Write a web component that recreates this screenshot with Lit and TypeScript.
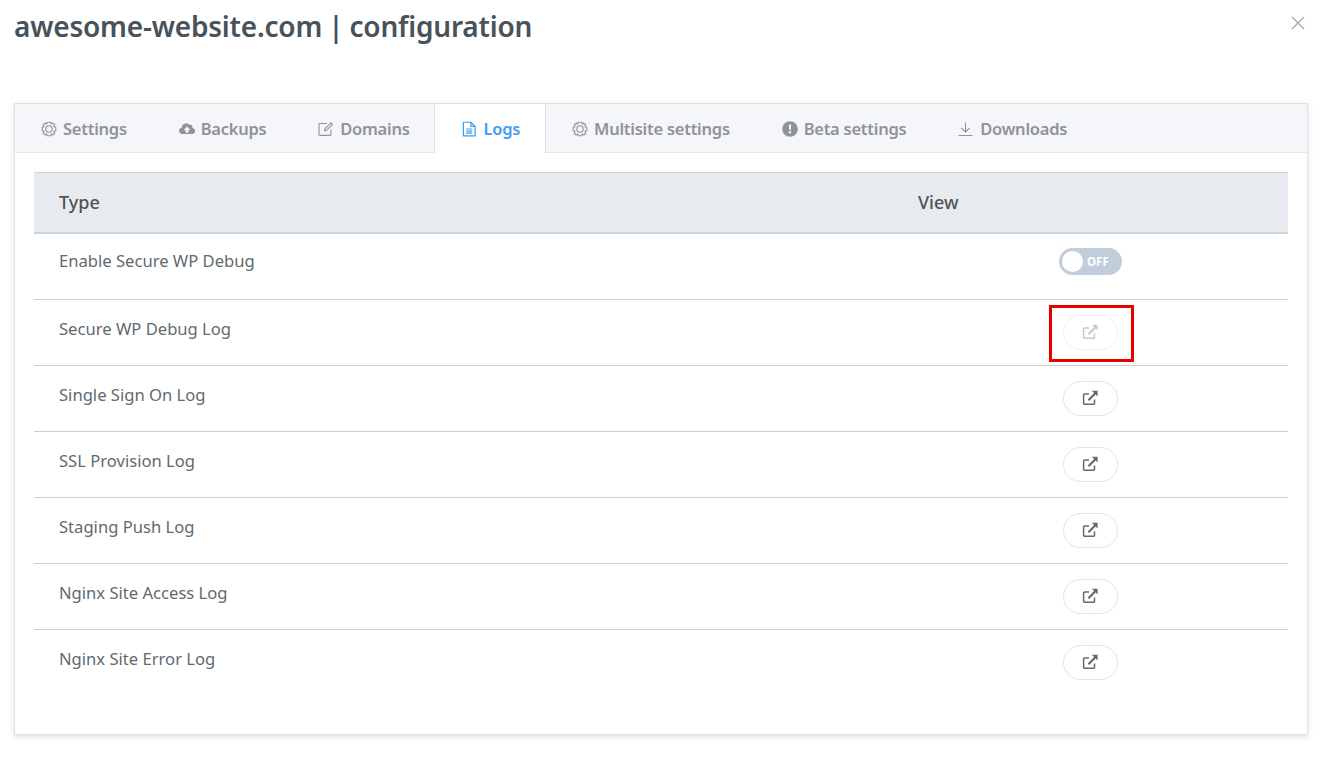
import { LitElement, html, css, svg } from "lit";
import { customElement } from "lit/decorators.js";

const gear = svg`<g fill="none" stroke="currentColor" stroke-width="1.1"><path d="M6.2 1.2h3.6l.5 1.8 1.6-.9 1.9 1.9-.9 1.7 1.9.5v3.6l-1.9.5.9 1.7-1.9 1.9-1.6-.9-.5 1.8H6.2l-.5-1.8-1.6.9-1.9-1.9.9-1.7-1.9-.5V6.2l1.9-.5-.9-1.7 1.9-1.9 1.6.9z" stroke-linejoin="round"/><circle cx="8" cy="8" r="3.2"/></g>`;
const cloud = svg`<path fill="currentColor" d="M13.300 6.900a2.500 2.500 0 0 0-3.300-3.100A4.200 4.200 0 0 0 2.700 6.300v.5A3 3 0 0 0 3.500 12.900h9.200a3 3 0 0 0 .6-6zM9.500 9v2.800H6.500V9H4.700L8 5.500l3.300 3.500z"/>`;
const edit = svg`<g fill="none" stroke="currentColor" stroke-width="1.1" stroke-linejoin="round"><path d="M13 8.500v5a.9.900 0 0 1-.9.900H1.900a.9.900 0 0 1-.9-.9V3.400a.9.900 0 0 1 .9-.9h7"/><path d="M6.500 9.800l.4-2 6-6 1.600 1.600-6 6z"/></g>`;
const file = svg`<g fill="none" stroke="currentColor" stroke-width="1.300" stroke-linejoin="round"><path d="M1.500 .8h8l4.500 4.500v10h-12.500z"/><path d="M9.500 .8v4.500h4.500M4.500 8h6.500M4.500 10.200h6.500M4.500 12.500h6.500"/></g>`;
const alert = svg`<circle cx="8" cy="8" r="7.800" fill="currentColor"/><path fill="#f4f6fa" d="M6.900 3.500h2.200l-.3 5.500H7.200zM8 9.900a1.300 1.300 0 1 1 0 2.600A1.300 1.300 0 0 1 8 9.900z"/>`;
const download = svg`<g fill="none" stroke="currentColor" stroke-width="1.100"><path d="M.5 14.500h14M7.500 1.500v9.500M3.200 6.800L7.500 11l4.300-4.200"/></g>`;
const external = svg`<g fill="none" stroke="currentColor" stroke-width="1.500" stroke-linejoin="round"><path d="M12.500 9.500v3.700a1.100 1.100 0 0 1-1.100 1.100H2.700a1.100 1.100 0 0 1-1.100-1.100V5a1.100 1.100 0 0 1 1.100-1.100H7"/></g><path fill="currentColor" d="M9.800.8h5.800v5.800l-2-2-6.400 6.400-1.500-1.500 6.400-6.400z"/>`;

const tabs = [
  { label: "Settings", icon: gear },
  { label: "Backups", icon: cloud },
  { label: "Domains", icon: edit },
  { label: "Logs", icon: file, active: true },
  { label: "Multisite settings", icon: gear },
  { label: "Beta settings", icon: alert },
  { label: "Downloads", icon: download },
];
const rows = [
  "Secure WP Debug Log",
  "Single Sign On Log",
  "SSL Provision Log",
  "Staging Push Log",
  "Nginx Site Access Log",
  "Nginx Site Error Log",
];

@customElement("app-root")
export class AppRoot extends LitElement {
  static styles = css`
    :host {
      display: block;
      height: 757px;
      box-sizing: border-box;
      padding: 0 17px 0 14px;
      background: #fff;
      font-family: "Noto Sans", "Open Sans", sans-serif;
      color: #4a5559;
      overflow: hidden;
    }
    .top {
      display: flex;
      justify-content: space-between;
      height: 103px;
    }
    h1 {
      margin: 6px 0 0;
      font-size: 28px;
      line-height: 40px;
      font-weight: 600;
      letter-spacing: -0.2px;
      word-spacing: -1px;
      color: #47525a;
    }
    .close {
      width: 14px;
      height: 14px;
      margin: 16px 3px 0 0;
      color: #a3a6ae;
    }
    .card {
      height: 632px;
      box-sizing: border-box;
      border: 1px solid #dfe3e8;
      box-shadow: 0 2px 5px rgba(120, 130, 160, 0.25);
      display: flex;
      flex-direction: column;
    }
    .tabs {
      display: flex;
      height: 49px;
      box-sizing: border-box;
      background: #f4f6fa;
      border-bottom: 1px solid #e4e7ec;
    }
    .tab {
      display: flex;
      align-items: center;
      gap: 6px;
      padding: 1px 25.850px 0 26px;
      font-size: 16.500px;
      font-weight: 600;
      color: #8f9299;
      letter-spacing: -0.25px;
      box-sizing: border-box;
      height: 48px;
      white-space: nowrap;
    }
    .tab svg {
      width: 16px;
      height: 16px;
      flex: none;
    }
    .tab.active {
      background: #fff;
      color: #3f9cf5;
      border-left: 1px solid #e0e4ea;
      border-right: 1px solid #e0e4ea;
      height: 49px;
      margin-left: -1px;
      padding: 0 25px 0 27px;
    }
    .tab.active svg {
      width: 15px;
    }
    .body {
      padding: 19px 19px 0;
    }
    .head,
    .row {
      display: grid;
      grid-template-columns: 859px 395px;
      align-items: center;
    }
    .head {
      height: 62px;
      box-sizing: border-box;
      background: #e7ebef;
      border-top: 1px solid #cfd5dc;
      border-bottom: 2px solid #cfd5dc;
      font-size: 18px;
      font-weight: 500;
      color: #4a5559;
    }
    .head span {
      padding-left: 25px;
      padding-bottom: 2px;
    }
    .row {
      height: 66px;
      box-sizing: border-box;
      border-bottom: 1px solid #cfcfcf;
      font-size: 16.600px;
      color: #5f6a70;
    }
    .row:last-child {
      border-bottom-color: transparent;
    }
    .name {
      padding-left: 25px;
      padding-bottom: 9px;
    }
    .name.first {
      padding-bottom: 12px;
    }
    .ctl {
      display: flex;
      justify-content: center;
      padding-bottom: 9px;
      position: relative;
    }
    .toggle {
      width: 63px;
      height: 27px;
      margin-bottom: 1px;
      border-radius: 14px;
      background: #c0cddb;
      display: flex;
      align-items: center;
      box-sizing: border-box;
      padding-left: 3px;
      gap: 4px;
      font-size: 11.500px;
      font-weight: 700;
      color: #fff;
    }
    .knob {
      width: 21px;
      height: 21px;
      border-radius: 50%;
      background: #fff;
    }
    .btn {
      width: 55px;
      height: 35px;
      margin-top: 9px;
      box-sizing: border-box;
      border: 1px solid #e2e4ec;
      border-radius: 18px;
      background: #fff;
      color: #66686d;
      display: flex;
      align-items: center;
      justify-content: center;
      position: relative;
    }
    .btn svg {
      width: 16px;
      height: 16px;
      margin: -1px 2px 0 0;
    }
    .btn.off {
      color: #c8cacf;
      border-color: #eff0f4;
    }
    .mark {
      position: absolute;
      left: -15px;
      top: -11px;
      width: 85px;
      height: 57px;
      box-sizing: border-box;
      border: 3px solid #e60000;
    }
  `;

  render() {
    return html`
      <div class="top">
        <h1>awesome-website.com | configuration</h1>
        <svg class="close" viewBox="0 0 14 14" fill="none" stroke="currentColor" stroke-width="1.200">
          <path d="M1 1l12 12M13 1L1 13" />
        </svg>
      </div>
      <div class="card">
        <div class="tabs">
          ${tabs.map(
            (t) => html`<div class="tab ${t.active ? "active" : ""}">
              <svg viewBox="0 0 16 16">${t.icon}</svg>${t.label}
            </div>`
          )}
        </div>
        <div class="body">
          <div class="head"><span>Type</span><span>View</span></div>
          <div class="row">
            <div class="name first">Enable Secure WP Debug</div>
            <div class="ctl">
              <div class="toggle"><div class="knob"></div>OFF</div>
            </div>
          </div>
          ${rows.map(
            (r, i) => html`<div class="row">
              <div class="name">${r}</div>
              <div class="ctl">
                <div class="btn ${i === 0 ? "off" : ""}">
                  <svg viewBox="0 0 16 16">${external}</svg>
                  ${i === 0 ? html`<div class="mark"></div>` : ""}
                </div>
              </div>
            </div>`
          )}
        </div>
      </div>
    `;
  }
}
